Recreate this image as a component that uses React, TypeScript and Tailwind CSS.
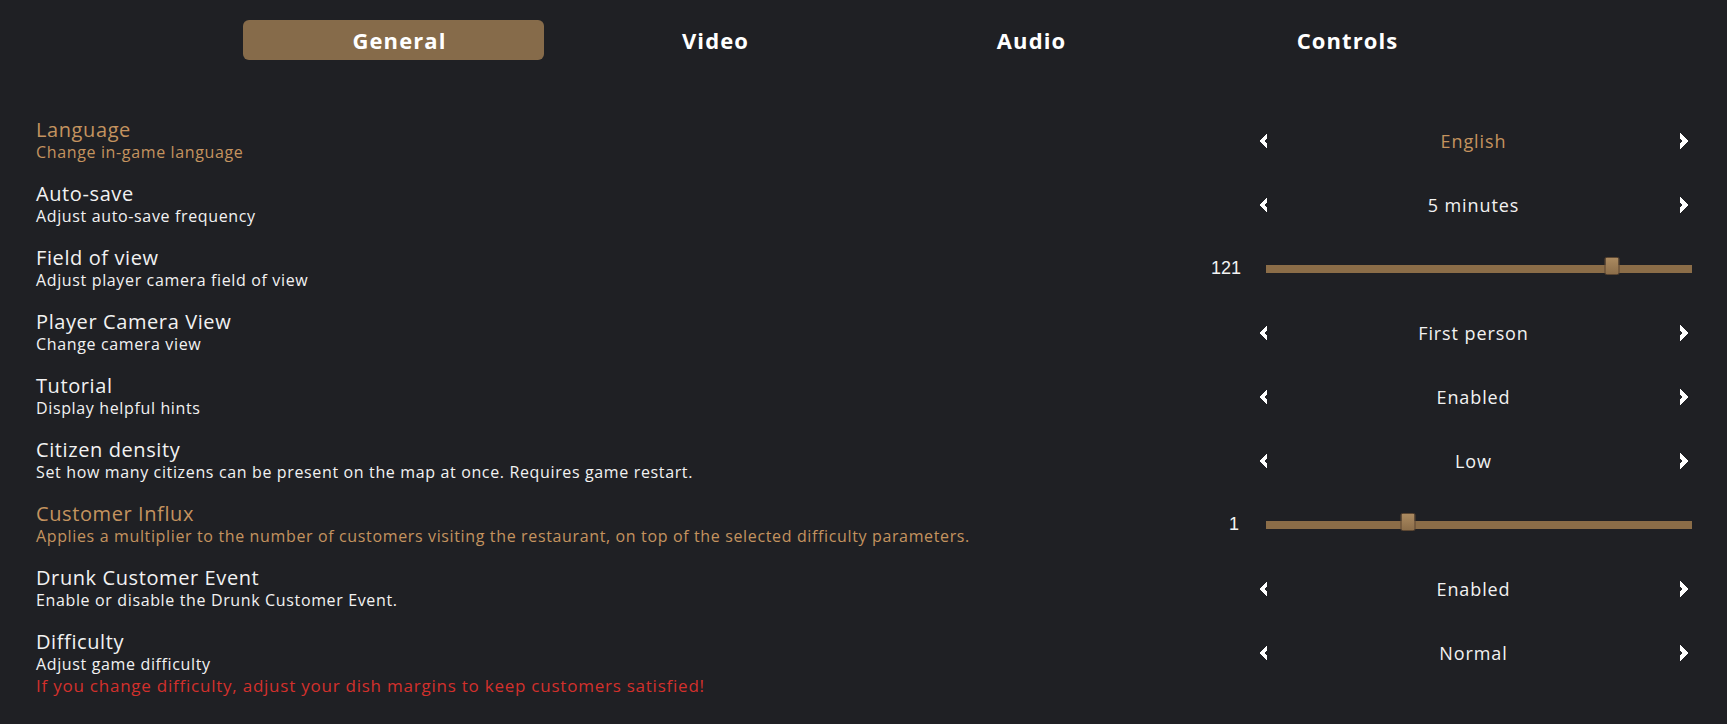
import { useState } from "react"

type Setting =
  | { kind: "select"; title: string; desc: string; value: string; accent?: boolean; warning?: string }
  | { kind: "slider"; title: string; desc: string; value: number; min: number; max: number; accent?: boolean }

const tabs = ["General", "Video", "Audio", "Controls"]

const settings: Setting[] = [
  { kind: "select", title: "Language", desc: "Change in-game language", value: "English", accent: true },
  { kind: "select", title: "Auto-save", desc: "Adjust auto-save frequency", value: "5 minutes" },
  { kind: "slider", title: "Field of view", desc: "Adjust player camera field of view", value: 121, min: 60, max: 135 },
  { kind: "select", title: "Player Camera View", desc: "Change camera view", value: "First person" },
  { kind: "select", title: "Tutorial", desc: "Display helpful hints", value: "Enabled" },
  {
    kind: "select",
    title: "Citizen density",
    desc: "Set how many citizens can be present on the map at once. Requires game restart.",
    value: "Low",
  },
  {
    kind: "slider",
    title: "Customer Influx",
    desc: "Applies a multiplier to the number of customers visiting the restaurant, on top of the selected difficulty parameters.",
    value: 1,
    min: 0.5,
    max: 2,
    accent: true,
  },
  { kind: "select", title: "Drunk Customer Event", desc: "Enable or disable the Drunk Customer Event.", value: "Enabled" },
  {
    kind: "select",
    title: "Difficulty",
    desc: "Adjust game difficulty",
    value: "Normal",
    warning: "If you change difficulty, adjust your dish margins to keep customers satisfied!",
  },
]

function Arrow({ dir }: { dir: "left" | "right" }) {
  return (
    <svg
      width="8"
      height="16"
      viewBox="0 0 8 16"
      shapeRendering="crispEdges"
      className={dir === "right" ? "-scale-x-100" : ""}
    >
      <polygon points="8,0 0,8 8,16 8,11 5.2,8 8,5" fill="#ffffff" />
    </svg>
  )
}

function Selector({ value, accent }: { value: string; accent?: boolean }) {
  return (
    <div className="flex items-center justify-between pl-[48px] pr-[4px]">
      <Arrow dir="left" />
      <span className={`text-[18px] leading-[24px] tracking-[0.05em] ${accent ? "text-[#c4935f]" : "text-[#f2f2f2]"}`}>
        {value}
      </span>
      <Arrow dir="right" />
    </div>
  )
}

function Slider({ value, min, max }: { value: number; min: number; max: number }) {
  const pct = ((value - min) / (max - min)) * 100
  return (
    <div className="flex items-center">
      <span className="w-[28px] text-right text-[18px] text-[#f2f2f2] font-['Liberation_Sans',Arial,sans-serif]">
        {value}
      </span>
      <div className="relative ml-[27px] h-[8px] flex-1 bg-[#8b6d48]">
        <div
          className="absolute top-[-8px] h-[18px] w-[15px] -translate-x-1/2 rounded-[2px] border border-[#5c4732] bg-gradient-to-b from-[#ab8a60] to-[#8c6e4a]"
          style={{ left: `${pct}%` }}
        />
      </div>
    </div>
  )
}

export default function App() {
  const [tab, setTab] = useState("General")

  return (
    <div className="h-[724px] w-full overflow-hidden bg-[#1f2024] font-['Open_Sans',sans-serif] text-[#f2f2f2]">
      {/* Tabs */}
      <div className="flex gap-[15px] pl-[243px] pt-[20px]">
        {tabs.map(t => (
          <button
            key={t}
            onClick={() => setTab(t)}
            className={`h-[40px] w-[301px] rounded-[6px] pl-[12px] text-[22px] font-bold tracking-[0.05em] text-white ${
              tab === t ? "bg-[#866b4a]" : ""
            }`}
          >
            {t}
          </button>
        ))}
      </div>

      {/* Settings list */}
      <div className="mt-[58px] flex flex-col gap-[19px] pl-[36px] pr-[35px]">
        {settings.map(s => (
          <div key={s.title}>
            <div className="flex items-center justify-between">
              <div className={s.accent ? "text-[#c4935f]" : "text-[#f2f2f2]"}>
                <p className="text-[20px] leading-[24px] tracking-[0.03em]">{s.title}</p>
                <p className="text-[16px] leading-[21px] tracking-[0.04em]">{s.desc}</p>
              </div>
              <div className="w-[481px]">
                {s.kind === "select" ? (
                  <Selector value={s.value} accent={s.accent} />
                ) : (
                  <Slider value={s.value} min={s.min} max={s.max} />
                )}
              </div>
            </div>
            {s.kind === "select" && s.warning && (
              <p className="text-[17px] leading-[22px] tracking-[0.045em] text-[#d3302c]">{s.warning}</p>
            )}
          </div>
        ))}
      </div>
    </div>
  )
}
